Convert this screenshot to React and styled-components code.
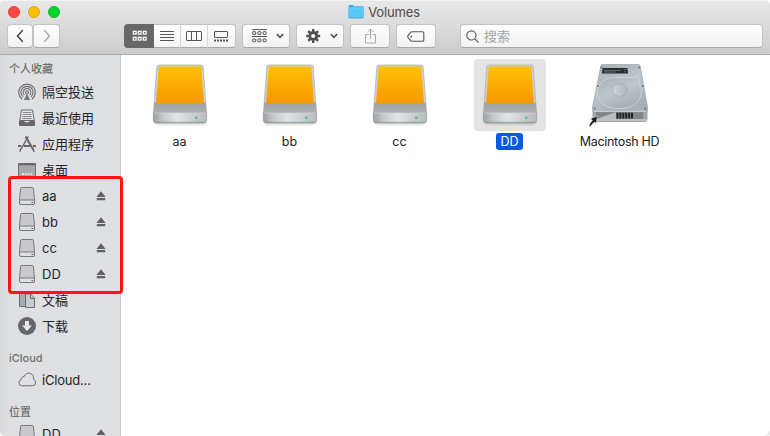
import React from "react";
import styled, { createGlobalStyle, css } from "styled-components";

const Global = createGlobalStyle`
  *, *::before, *::after { box-sizing: border-box; }
  html, body { margin: 0; padding: 0; background: #fff; overflow: hidden; }
  body { font-family: Inter, "Noto Sans CJK SC", sans-serif; font-size: 13px; }
  svg { display: block; flex: none; }
`;

const Window = styled.div`
  position: relative;
  display: flex;
  flex-direction: column;
  width: 770px;
  height: 436px;
  overflow: hidden;
  background: #fff;
  border-radius: 5px;
`;

const Header = styled.header`
  flex: none;
  height: 55px;
  background: linear-gradient(#e7e7e7, #cdcdcd);
  border-top: 1px solid #f3f3f3;
  border-bottom: 1px solid #a9a9a9;
`;

const TitleBar = styled.div`
  display: grid;
  grid-template-columns: 1fr auto 1fr;
  align-items: center;
  height: 21px;
  padding: 0 8px;
`;

const Lights = styled.div`
  display: flex;
  gap: 8px;
`;

const Light = styled.span`
  width: 12px;
  height: 12px;
  border-radius: 50%;
  background: ${(p) => p.$fill};
  border: 1px solid ${(p) => p.$edge};
`;

const Title = styled.div`
  display: flex;
  align-items: center;
  gap: 4px;
  padding-right: 2px;
  color: #4b4b4b;
  font-size: 13px;
  line-height: 20px;
  letter-spacing: -0.15px;
`;

const Toolbar = styled.div`
  display: flex;
  height: 24px;
  margin-top: 2px;
  padding-left: 7px;
`;

const buttonFace = css`
  background: linear-gradient(#fefefe, #f3f3f3);
  border: 1px solid #c3c3c3;
  border-bottom-color: #a9a9a9;
  border-radius: 4px;
`;

const ToolButton = styled.div`
  ${buttonFace}
  display: flex;
  align-items: center;
  justify-content: center;
  gap: ${(p) => p.$gap || 0}px;
  width: ${(p) => p.$w}px;
  height: 24px;
  margin-left: ${(p) => p.$before || 0}px;
  padding-left: ${(p) => (p.$gap ? 4 : 0)}px;
`;

const Segments = styled.div`
  ${buttonFace}
  display: flex;
  width: 112px;
  height: 24px;
  margin-left: 64px;
`;

const Segment = styled.div`
  display: flex;
  flex: ${(p) => (p.$active ? "0 0 30px" : "1")};
  align-items: center;
  justify-content: center;
  margin: -1px 0 -1px ${(p) => (p.$active ? "-1px" : "0")};
  background: ${(p) => (p.$active ? "#676767" : "transparent")};
  border-right: ${(p) => (p.$active ? "0" : "1px solid #d5d5d5")};
  border-radius: ${(p) => (p.$active ? "4px 0 0 4px" : "0")};
  &:last-child { border-right: 0; padding-right: 1px; }
`;

const Search = styled.div`
  ${buttonFace}
  display: flex;
  align-items: center;
  gap: 5px;
  width: 303px;
  height: 24px;
  margin-left: 24px;
  padding-left: 5px;
  color: #a3a3a3;
  font-size: 13px;
  line-height: 22px;
`;

const Body = styled.div`
  display: flex;
  flex: 1;
  min-height: 0;
`;

const Sidebar = styled.aside`
  flex: none;
  width: 121px;
  background: linear-gradient(90deg, #dadbdd, #dfe0e2 12px, #dfe0e3);
  border-right: 1px solid #c6c7c9;
  overflow: hidden;
`;

const Heading = styled.h2`
  height: ${(p) => p.$h}px;
  margin: 0;
  padding: ${(p) => p.$top}px 0 0 9px;
  color: #6d6e70;
  font-size: 11px;
  font-weight: 500;
  line-height: 16px;
`;

const Row = styled.div`
  display: flex;
  align-items: center;
  height: 26px;
  padding: 0 14px 0 17px;
  color: #242426;
  line-height: 26px;
`;

const RowIcon = styled.span`
  width: 20px;
  margin-right: 5px;
`;

const RowLabel = styled.span`
  flex: 1;
  white-space: nowrap;
  letter-spacing: ${(p) => (p.$tight ? "-0.2px" : "0")};
`;

const Files = styled.main`
  display: flex;
  flex: 1;
  align-items: flex-start;
  padding: 4px 0 0 4px;
`;

const File = styled.div`
  display: flex;
  flex-direction: column;
  align-items: center;
  width: 110px;
`;

const Thumb = styled.div`
  width: 72px;
  height: 72px;
  border-radius: 4px;
  background: ${(p) => (p.$selected ? "#e4e4e4" : "transparent")};
`;

const FileName = styled.span`
  height: 17px;
  margin: 2px 1px 0 0;
  padding: 0 ${(p) => (p.$selected ? 4 : 3)}px;
  border-radius: 3px;
  font-size: 12.5px;
  line-height: 17px;
  letter-spacing: ${(p) => (p.$tight ? "-0.3px" : "0")};
  white-space: nowrap;
  color: ${(p) => (p.$selected ? "#fff" : "#222")};
  background: ${(p) => (p.$selected ? "#0b58df" : "transparent")};
`;

const Highlight = styled.div`
  position: absolute;
  left: 8px;
  top: 176px;
  width: 115px;
  height: 118px;
  border: 3px solid #fd1708;
  border-radius: 4px;
`;

const Grip = styled.div`
  position: absolute;
  right: 0;
  bottom: 0;
`;

const FolderIcon = () => (
  <svg width="16" height="16" viewBox="0 0 16 16">
    <path d="M.5 2.500Q.5 1 1.500 1H5L6.300 2.300H15q.6 0 .6.800V13H.500Z" fill="#35b4e8" />
    <path d="M.5 4.300H15.600V13.600H.5Z" fill="#59c9f8" />
    <path d="M.5 4H15.600" stroke="#7fdcff" />
    <path d="M.5 13.900H15.600" stroke="#339dce" />
  </svg>
);

const Chevron = ({ left, color }) => (
  <svg width="8" height="14" viewBox="0 0 8 14" fill="none" stroke={color} strokeWidth="1.5">
    <path d={left ? "M6.700 1.200 1.500 7l5.200 5.800" : "M1.300 1.200 6.500 7l-5.200 5.800"} />
  </svg>
);

const DownChevron = () => (
  <svg width="8" height="6" viewBox="0 0 8 6" fill="none" stroke="#4a4a4a" strokeWidth="1.500">
    <path d="m.8 1 3.200 3.300L7.200 1" />
  </svg>
);

const GridIcon = () => (
  <svg width="15" height="12" viewBox="0 0 15 12" fill="none" stroke="#fff" strokeWidth="1.200">
    {[1.300, 6.300, 11.300].map((x) => [1.300, 7.300].map((y) => (
      <rect key={`${x}-${y}`} x={x} y={y} width="2.800" height="2.800" />
    )))}
  </svg>
);

const ListIcon = () => (
  <svg width="14" height="11" viewBox="0 0 14 11" stroke="#555" strokeWidth="1">
    <path d="M0 .5h14M0 3.500h14M0 6.500h14M0 9.500h14" />
  </svg>
);

const ColumnsIcon = () => (
  <svg width="16" height="11" viewBox="0 0 16 11" fill="none" stroke="#555">
    <rect x=".5" y=".5" width="15" height="9" rx=".5" />
    <path d="M5.500.5v9M10.500.5v9" />
  </svg>
);

const GalleryIcon = () => (
  <svg width="15" height="11" viewBox="0 0 15 11" fill="none" stroke="#555">
    <rect x=".5" y=".5" width="13" height="6" rx=".5" />
    <path d="M0 9.500h14" strokeWidth="2" strokeDasharray="2 1" />
  </svg>
);

const ArrangeIcon = () => (
  <svg width="15" height="14" viewBox="0 0 15 14" fill="none" stroke="#555">
    <path d="M0 .6h15M0 7.500h15" strokeWidth="1" />
    {[0.7, 5.900, 11.1].map((x) => [2.700, 10].map((y) => (
      <rect key={`${x}-${y}`} x={x} y={y} width="3" height="2.700" rx=".4" />
    )))}
  </svg>
);

const GearIcon = () => (
  <svg width="15" height="14" viewBox="0 0 15 14" fill="none" stroke="#505050">
    <circle cx="7.200" cy="7" r="3.500" strokeWidth="2.800" />
    {[0, 45, 90, 135, 180, 225, 270, 315].map((a) => (
      <path key={a} d="M7.200 0v2.500" strokeWidth="2.400" transform={`rotate(${a} 7.200 7)`} />
    ))}
  </svg>
);

const ShareIcon = () => (
  <svg width="13" height="16" viewBox="0 0 13 16" fill="none" stroke="#a9a9a9">
    <path d="M4.500 6.500H1.500v8.500h10V6.500H8.500M6.500 11V1.200M3.700 3.900l2.800-2.800 2.800 2.800" />
  </svg>
);

const TagIcon = () => (
  <svg width="18" height="11" viewBox="0 0 18 11" fill="none" stroke="#555" strokeWidth="1.100">
    <path d="M5 .7H15.500q1.300 0 1.300 1.300V9q0 1.300-1.300 1.300H5Q4.300 10.300 3.800 9.800L1.200 6.700Q.3 5.500 1.200 4.300L3.800 1.200Q4.300.7 5 .7Z" />
    <circle cx="4.300" cy="5.500" r=".9" fill="#555" stroke="none" />
  </svg>
);

const SearchIcon = () => (
  <svg width="13" height="13" viewBox="0 0 13 13" fill="none" stroke="#606060" strokeWidth="1.200">
    <circle cx="5.400" cy="5.400" r="4.600" />
    <path d="m8.800 8.800 3.700 3.700" />
  </svg>
);

const AirDropIcon = () => (
  <svg width="20" height="18" viewBox="0 0 20 18" fill="none" stroke="#6b6c6e" strokeWidth="1.100">
    <path d="M5.200 16.200A8.300 8.300 0 1 1 14.800 16.200" />
    <path d="M6.100 13.900A6 6 0 1 1 13.900 13.900" />
    <path d="M7.300 12A3.800 3.800 0 1 1 12.700 12" />
    <circle cx="10" cy="9.300" r="1.500" />
    <path d="m10 10.500-3 6.500h6Z" fill="#747577" stroke="none" />
  </svg>
);

const RecentsIcon = () => (
  <svg width="20" height="18" viewBox="0 0 20 18">
    <path d="M4.500 1h11l1.700 10.500H2.800Z" fill="#e4e5e6" stroke="#6b6c6e" />
    <path d="M6 3.500h8M5.700 5.500h8.600M5.400 7.500h9.200M5.200 9.500h9.600" stroke="#88898b" />
    <path d="M2 11.500h4.700q.8 2 3.300 2t3.300-2H18v4.500q0 1-1 1H3q-1 0-1-1Z" fill="#66676a" />
  </svg>
);

const AppsIcon = () => (
  <svg width="20" height="18" viewBox="0 0 20 18" fill="none" stroke="#656668">
    <path d="M11.300 1.500 3.800 14.500" strokeWidth="1.500" />
    <path d="M8.500 1.500 16.500 15" strokeWidth="2" />
    <path d="M1 11h3.300M7 11h6M16 11h3" strokeWidth="2" />
    <path d="m3.600 14-.9 2.800M16.300 14.500l1 2.500" strokeWidth="1.300" />
  </svg>
);

const DesktopIcon = () => (
  <svg width="20" height="18" viewBox="0 0 20 18">
    <rect x="1.500" y="2.500" width="17" height="14" fill="#a6a7aa" stroke="#707173" />
    <path d="M2 3.500h16" stroke="#636466" strokeWidth="1.500" />
    <path d="M5 13h10.500" stroke="#d9dadc" strokeWidth="2" strokeDasharray="2 .8" />
    <path d="M5 15.500h10.500" stroke="#707173" />
  </svg>
);

const SideDriveIcon = () => (
  <svg width="20" height="18" viewBox="0 0 20 18" fill="#c8c9cc" stroke="#77787a">
    <path d="M4.500.5h11q.8 0 .9.800L17.500 13v3q0 1.500-1.500 1.500H4Q2.500 17.500 2.500 16V13L3.600 1.300Q3.700.5 4.500.5Z" />
    <path d="M2.500 14q.2-1 1.300-1h12.400q1.100 0 1.300 1v2q0 1.500-1.500 1.500H4q-1.500 0-1.500-1.500Z" fill="#dedfe1" />
    <path d="M14.500 15.500h1.500" stroke="#555" />
  </svg>
);

const DocumentsIcon = () => (
  <svg width="20" height="18" viewBox="0 0 20 18" stroke="#6b6c6e">
    <path d="M2.500 2.500h5l3 3v10h-8Z" fill="#aaabad" />
    <path d="M8.500 3h5l4 4v9.500h-9Z" fill="#c9cacc" />
    <path d="M13.500 3v4.500h4" fill="none" />
  </svg>
);

const DownloadIcon = () => (
  <svg width="20" height="18" viewBox="0 0 20 18">
    <circle cx="10" cy="9" r="9" fill="#66676a" />
    <path d="M8 4h4v4.500h3L10 14 5 8.500h3Z" fill="#e7e8ea" />
  </svg>
);

const CloudIcon = () => (
  <svg width="20" height="18" viewBox="0 0 20 18" fill="none" stroke="#6b6c6e">
    <path d="M4.500 14.800h10.900a3.300 3.300 0 0 0 1.100-6.400A4.900 4.900 0 0 0 7.100 5.600 2.900 2.900 0 0 0 4.100 8.800 3.100 3.100 0 0 0 4.500 14.800Z" />
  </svg>
);

const EjectIcon = () => (
  <svg width="10" height="10" viewBox="0 0 10 10" fill="#606164">
    <path d="M5 .3 9.600 6H.4ZM.8 7h8.400v2.300H.8Z" />
  </svg>
);

const DriveArt = () => (
  <svg width="72" height="72" viewBox="0 0 72 72">
    <defs>
      <linearGradient id="orange" x2="0" y2="1">
        <stop stopColor="#ffc002" /><stop offset="1" stopColor="#f79800" />
      </linearGradient>
      <linearGradient id="metal">
        <stop stopColor="#9ba0a2" /><stop offset=".18" stopColor="#c4c8cb" />
        <stop offset=".45" stopColor="#e1e5e9" /><stop offset="1" stopColor="#b5babd" />
      </linearGradient>
      <linearGradient id="slope" x2="0" y2="1">
        <stop offset=".7" stopColor="#cbd0d1" /><stop offset=".72" stopColor="#a2a4a5" />
        <stop offset="1" stopColor="#b1b3b4" />
      </linearGradient>
      <filter id="shade"><feGaussianBlur stdDeviation="1" /></filter>
    </defs>
    <rect x="10" y="58" width="52" height="7.500" rx="3" fill="#777" opacity=".35" filter="url(#shade)" />
    <path d="M14.500 6h43q1.500 0 1.700 1.700L62.500 53v6H9.500v-6L12.800 7.700Q13 6 14.500 6Z" fill="url(#slope)" stroke="#a1a5a6" strokeWidth=".6" />
    <path d="M14.800 7.500H57.200L60 44.300H12Z" fill="url(#orange)" />
    <path d="M9.300 53.500h53.400v7.500q0 3-3 3H12.300q-3 0-3-3Z" fill="url(#metal)" stroke="#9ca1a3" strokeWidth=".6" />
    <path d="M10 54h52" stroke="#d3d6d7" strokeWidth=".8" />
    <path d="M11 63.300h50" stroke="#8b9193" strokeWidth=".8" />
    <circle cx="52.300" cy="58.700" r="1.300" fill="#42c860" />
  </svg>
);

const HardDiskArt = () => (
  <svg width="72" height="72" viewBox="0 0 72 72">
    <defs>
      <linearGradient id="disk" x2=".5" y2="1">
        <stop stopColor="#a4adb1" /><stop offset=".55" stopColor="#bdc6ca" /><stop offset="1" stopColor="#a7b1b5" />
      </linearGradient>
      <linearGradient id="platter">
        <stop stopColor="#cfd6d9" /><stop offset="1" stopColor="#adb6bb" />
      </linearGradient>
    </defs>
    <path d="M8.500 50h55v10q0 3-3 3H11.500q-3 0-3-3Z" fill="#a0a6a8" />
    <path d="M12 53h47v7H12Z" fill="#808587" />
    <path d="M14 59.500 32 53v7H14Z" fill="#b9bebf" />
    <path d="M32.500 56.500h17" stroke="#202426" strokeWidth="6" strokeDasharray="2 .9" />
    <path d="M9 61h54" stroke="#c6cacb" strokeWidth="1.500" />
    <path d="M18.500 5.500h36q1.500 0 1.700 1.700L63.500 48v3q0 2-2 2H10.500q-2 0-2-2v-3L16.800 7.200Q17 5.500 18.500 5.500Z" fill="url(#disk)" stroke="#929b9f" strokeWidth=".6" />
    <path d="M10 52.300h52" stroke="#d3d9da" strokeWidth=".9" />
    <path d="M53.500 15.500 57 30Q59 38 52 44.500 46 49.700 36 49.700 22 49.700 15.700 42 10.500 34.500 15.500 26 21.500 17.500 34 18.500H50Q53.500 18.500 53.500 15.500Z" fill="url(#disk)" stroke="#ced5d7" strokeWidth=".9" />
    <ellipse cx="36" cy="31" rx="7.500" ry="6.300" fill="url(#platter)" stroke="#98a3a7" strokeWidth=".6" />
    <path d="M18.500 9h25l.5 5.500H18Z" fill="#272c2f" />
    <path d="M20 11.500h17M20 13h12M39.500 10.500h3M40 12.800h2" stroke="#899193" strokeWidth=".6" />
    {[[17.300, 8.500], [55, 8.500], [14, 27], [59, 27], [10.800, 49.500], [61, 49.500]].map(([x, y]) => (
      <circle key={`${x}-${y}`} cx={x} cy={y} r="1" fill="#5b7780" />
    ))}
    <path d="M4.800 67.500Q6 63.500 8.500 61.200L6.300 59.800 13.300 57 12.300 64.500 10.300 63 6.500 67.300Z" fill="#171b22" stroke="#fff" strokeWidth=".5" />
  </svg>
);

const favorites = [
  ["隔空投送", AirDropIcon],
  ["最近使用", RecentsIcon],
  ["应用程序", AppsIcon],
  ["桌面", DesktopIcon],
  ["aa", SideDriveIcon, true],
  ["bb", SideDriveIcon, true],
  ["cc", SideDriveIcon, true],
  ["DD", SideDriveIcon, true],
  ["文稿", DocumentsIcon],
  ["下载", DownloadIcon],
];

const SidebarRow = ({ label, Icon, eject, tight }) => (
  <Row>
    <RowIcon><Icon /></RowIcon>
    <RowLabel $tight={tight}>{label}</RowLabel>
    {eject && <EjectIcon />}
  </Row>
);

export default function App() {
  return (
    <>
      <Global />
      <Window>
        <Header>
          <TitleBar>
            <Lights>
              <Light $fill="#fe4a45" $edge="#e13d39" />
              <Light $fill="#ffbd05" $edge="#e5a30b" />
              <Light $fill="#05d62a" $edge="#09b725" />
            </Lights>
            <Title><FolderIcon />Volumes</Title>
          </TitleBar>
          <Toolbar>
            <ToolButton $w={26}><Chevron left color="#444" /></ToolButton>
            <ToolButton $w={27}><Chevron color="#ababab" /></ToolButton>
            <Segments>
              <Segment $active><GridIcon /></Segment>
              <Segment><ListIcon /></Segment>
              <Segment><ColumnsIcon /></Segment>
              <Segment><GalleryIcon /></Segment>
            </Segments>
            <ToolButton $w={48} $before={6} $gap={9}><ArrangeIcon /><DownChevron /></ToolButton>
            <ToolButton $w={48} $before={6} $gap={9}><GearIcon /><DownChevron /></ToolButton>
            <ToolButton $w={40} $before={6}><ShareIcon /></ToolButton>
            <ToolButton $w={40} $before={6}><TagIcon /></ToolButton>
            <Search><SearchIcon />搜索</Search>
          </Toolbar>
        </Header>
        <Body>
          <Sidebar>
            <Heading $h={24} $top={6}>个人收藏</Heading>
            {favorites.map(([label, Icon, eject]) => (
              <SidebarRow key={label} label={label} Icon={Icon} eject={eject} />
            ))}
            <Heading $h={28} $top={11}>iCloud</Heading>
            <SidebarRow label="iCloud..." Icon={CloudIcon} tight />
            <Heading $h={28} $top={11}>位置</Heading>
            <SidebarRow label="DD" Icon={SideDriveIcon} eject />
          </Sidebar>
          <Files>
            {["aa", "bb", "cc", "DD"].map((name) => (
              <File key={name}>
                <Thumb $selected={name === "DD"}><DriveArt /></Thumb>
                <FileName $selected={name === "DD"}>{name}</FileName>
              </File>
            ))}
            <File>
              <Thumb><HardDiskArt /></Thumb>
              <FileName $tight>Macintosh HD</FileName>
            </File>
          </Files>
        </Body>
        <Highlight />
        <Grip>
          <svg width="5" height="5" viewBox="0 0 5 5"><path d="M5 0v5H0Q4 4 5 0Z" fill="#aaa" /></svg>
        </Grip>
      </Window>
    </>
  );
}
